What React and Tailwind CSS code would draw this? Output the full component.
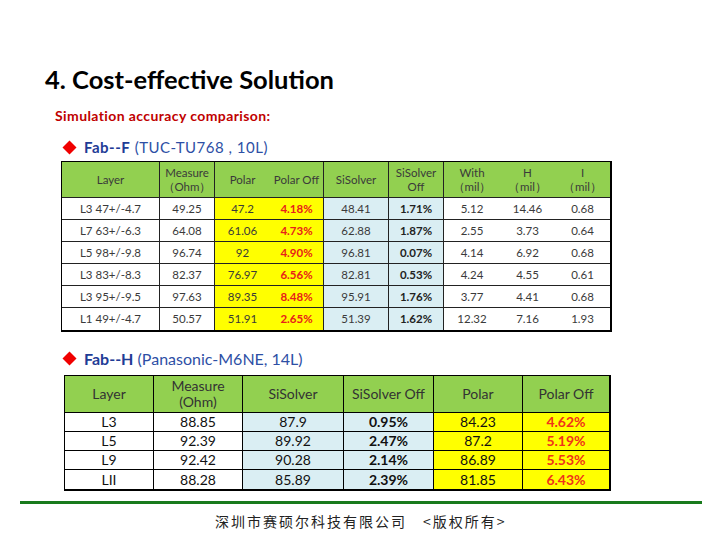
import React from "react";

const t1Cols = "grid-cols-[98px_55px_55px_54px_65px_55px_56px_55px_55px]";

const t1Head = [
  ["Layer"],
  ["Measure", "（Ohm）"],
  ["Polar"],
  ["Polar Off"],
  ["SiSolver"],
  ["SiSolver", "Off"],
  ["With", "（mil）"],
  ["H", "（mil）"],
  ["I", "（mil）"],
];

const t1Rows = [
  ["L3 47+/-4.7", "49.25", "47.2", "4.18%", "48.41", "1.71%", "5.12", "14.46", "0.68"],
  ["L7 63+/-6.3", "64.08", "61.06", "4.73%", "62.88", "1.87%", "2.55", "3.73", "0.64"],
  ["L5 98+/-9.8", "96.74", "92", "4.90%", "96.81", "0.07%", "4.14", "6.92", "0.68"],
  ["L3 83+/-8.3", "82.37", "76.97", "6.56%", "82.81", "0.53%", "4.24", "4.55", "0.61"],
  ["L3 95+/-9.5", "97.63", "89.35", "8.48%", "95.91", "1.76%", "3.77", "4.41", "0.68"],
  ["L1 49+/-4.7", "50.57", "51.91", "2.65%", "51.39", "1.62%", "12.32", "7.16", "1.93"],
];

const t2Head = [["Layer"], ["Measure", "(Ohm)"], ["SiSolver"], ["SiSolver Off"], ["Polar"], ["Polar Off"]];
const t2Rows = [
  ["L3", "88.85", "87.9", "0.95%", "84.23", "4.62%"],
  ["L5", "92.39", "89.92", "2.47%", "87.2", "5.19%"],
  ["L9", "92.42", "90.28", "2.14%", "86.89", "5.53%"],
  ["LII", "88.28", "85.89", "2.39%", "81.85", "6.43%"],
];

function Diamond() {
  return (
    <svg width="15" height="15" viewBox="0 0 15 15" className="shrink-0">
      <polygon points="7.5,0.5 14.5,7.5 7.5,14.5 0.5,7.5" fill="#f00000" />
    </svg>
  );
}

function Table1() {
  return (
    <div className="ml-[61px] w-[551px] border-t border-l border-r-2 border-b-2 border-black text-[11.5px] text-[#3a3a3a]">
      <div className={`grid ${t1Cols}`}>
        {t1Head.map((h, i) => (
          <div
            key={i}
            className={`h-[36px] bg-[#92d050] border-b border-[#222] flex flex-col items-center justify-center leading-[14px] ${
              i === 2 || i === 6 || i === 7 || i === 8 ? "" : "border-r"
            }`}
          >
            {h.map((l, j) => (
              <span key={j}>{l}</span>
            ))}
          </div>
        ))}
        {t1Rows.map((r, ri) =>
          r.map((c, ci) => {
            let bg = "bg-white";
            if (ci === 2 || ci === 3) bg = "bg-[#ffff00]";
            if (ci === 4 || ci === 5) bg = "bg-[#daeef3]";
            let txt = "";
            if (ci === 3) txt = "text-[#e8201a] font-bold";
            if (ci === 5) txt = "font-bold text-[#222]";
            const br = ci === 2 || ci === 6 || ci === 7 || ci === 8 ? "" : "border-r";
            const bb = ri === 5 ? "h-[22px]" : "h-[22px] border-b";
            return (
              <div key={ri + "-" + ci} className={`${bg} ${txt} ${br} ${bb} border-[#222] flex items-center justify-center`}>
                {c}
              </div>
            );
          })
        )}
      </div>
    </div>
  );
}

function Table2() {
  return (
    <div className="ml-[64px] w-[547px] border-t border-l border-r-2 border-b-2 border-black text-[14px] text-[#111]">
      <div className="grid grid-cols-[89px_89px_101px_90px_89px_86px]">
        {t2Head.map((h, i) => (
          <div
            key={i}
            className={`h-[37px] bg-[#92d050] border-b border-black flex flex-col items-center justify-center leading-[16px] text-[#333] ${
              i === 5 ? "" : "border-r"
            }`}
          >
            {h.map((l, j) => (
              <span key={j}>{l}</span>
            ))}
          </div>
        ))}
        {t2Rows.map((r, ri) =>
          r.map((c, ci) => {
            let bg = "bg-white";
            if (ci === 2 || ci === 3) bg = "bg-[#daeef3]";
            if (ci === 4 || ci === 5) bg = "bg-[#ffff00]";
            let txt = "";
            if (ci === 3) txt = "font-bold";
            if (ci === 5) txt = "font-bold text-[#f0321a]";
            const br = ci === 5 ? "" : "border-r";
            const bb = ri === 3 ? "h-[19px]" : "h-[19px] border-b";
            return (
              <div key={ri + "-" + ci} className={`${bg} ${txt} ${br} ${bb} border-black flex items-center justify-center leading-none`}>
                {c}
              </div>
            );
          })
        )}
      </div>
    </div>
  );
}

export default function App() {
  return (
    <div className="w-[720px] h-[540px] bg-white overflow-hidden font-['Lato','Liberation_Sans',sans-serif]">
      <div className="pt-[64px]">
        <h1 className="ml-[45px] text-[25.5px] leading-[31px] font-bold text-black">4. Cost-effective Solution</h1>
        <p className="mt-[12px] ml-[55px] text-[14px] leading-[17px] tracking-[0.4px] font-bold text-[#c00000]">
          Simulation accuracy comparison:
        </p>
        <div className="mt-[14px] ml-[62px] flex items-center gap-[7px] h-[19px] text-[15px] leading-[19px] tracking-[0.5px]">
          <Diamond />
          <span className="text-[#1f3c96]">
            <span className="font-bold">Fab--F</span>{" "}
            <span className="text-[#2d4fa5]">(TUC-TU768 , 10L)</span>
          </span>
        </div>
        <div className="mt-[4px]">
          <Table1 />
        </div>
        <div className="mt-[16px] ml-[62px] flex items-center gap-[7px] h-[21px] text-[16px] leading-[21px]">
          <Diamond />
          <span className="text-[#1f3c96]">
            <span className="font-bold">Fab--H</span>{" "}
            <span className="text-[#2d4fa5]">(Panasonic-M6NE, 14L)</span>
          </span>
        </div>
        <div className="mt-[6px]">
          <Table2 />
        </div>
        <div className="mt-[10px] ml-[20px] w-[682px] h-[3px] bg-[#187a1c]" />
        <div className="mt-[7px] ml-[215px] text-[14px] leading-[20px] tracking-[2px] text-[#222] font-['Noto_Sans_CJK_SC',sans-serif]">
          深圳市赛硕尔科技有限公司　&lt;版权所有&gt;
        </div>
      </div>
    </div>
  );
}
